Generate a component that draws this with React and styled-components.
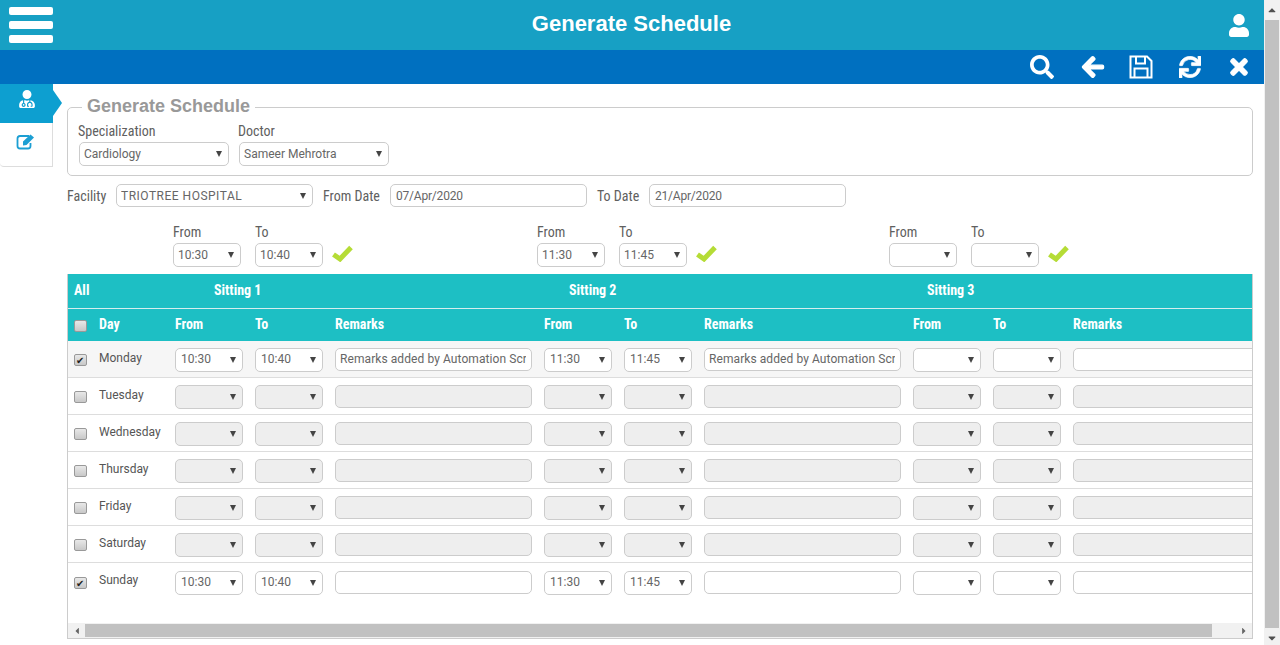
import React from "react";
import styled, { createGlobalStyle } from "styled-components";
import { FaUser, FaSearch, FaArrowLeft, FaSync, FaTimes, FaUserMd, FaCaretUp, FaCaretDown, FaCaretLeft, FaCaretRight } from "react-icons/fa";

const Global = createGlobalStyle`
  html, body { margin: 0; padding: 0; height: 645px; overflow: hidden; background: #fff; }
  * { box-sizing: border-box; }
  body { font-family: Roboto, "Liberation Sans", sans-serif; color: #555; }
`;

const condensed = `font-family: "Roboto Condensed", "Liberation Sans Narrow", Roboto, sans-serif;`;

const Page = styled.div`display: flex; width: 1280px; height: 645px; overflow: hidden;`;
const Main = styled.div`flex: none; width: 1264px; display: flex; flex-direction: column;`;

const Header = styled.header`
  height: 50px; background: #17a0c4; display: flex; align-items: center; justify-content: space-between;
  padding: 0 15px 0 9px; position: relative; flex: none;
`;
const Burger = styled.div`display: flex; flex-direction: column; gap: 6px; width: 44px;`;
const BurgerBar = styled.span`height: 8px; background: #fff; border-radius: 2px;`;
const Title = styled.h1`
  position: absolute; left: 0; right: 1px; top: 11px; margin: 0; text-align: center;
  font: bold 22px/26px "Liberation Sans", Arial, sans-serif; color: #fff;
`;
const UserIcon = styled(FaUser)`color: #fff; width: 20px; height: 23px;`;

const Toolbar = styled.div`
  height: 34px; background: #0070c0; display: flex; align-items: center; justify-content: flex-end;
  flex: none; padding-right: 13px; gap: 25px; color: #fff;
`;
const ToolIcon = styled.span`
  display: flex; width: 24px; height: 24px; align-items: center; justify-content: center;
  transform: translateX(${p => p.$dx || 0}px);
  svg { flex: none; width: ${p => p.$s || 24}px; height: ${p => p.$s || 24}px; stroke: currentColor; stroke-width: ${p => p.$bold || 0}; }
`;

const Body = styled.div`flex: 1; display: flex; min-height: 0;`;
const Side = styled.nav`flex: none; width: 67px;`;
const SideItem = styled.div`
  width: 53px; height: ${p => p.$h}px; display: flex; justify-content: center; padding-top: ${p => p.$pt}px;
  position: relative;
  background: ${p => (p.$active ? "#0d9fd0" : "#fff")};
  color: ${p => (p.$active ? "#fff" : "#1c9fd3")};
  border-right: ${p => (p.$active ? "0" : "1px solid #ddd")};
  border-bottom: ${p => (p.$active ? "0" : "1px solid #ddd")};
  border-bottom-left-radius: ${p => (p.$active ? "0" : "4px")};
  &::after {
    content: ""; display: ${p => (p.$active ? "block" : "none")}; position: absolute; left: 53px; top: 6px;
    border-left: 9px solid #0d9fd0; border-top: 13px solid transparent; border-bottom: 13px solid transparent;
  }
`;
const Content = styled.div`flex: none; width: 1186px; display: flex; flex-direction: column; position: relative;`;

const Fieldset = styled.fieldset`
  margin: 13px 0 0; padding: 6px 0 0 11px; height: 79px; border: 1px solid #ccc; border-radius: 5px; display: flex; gap: 10px; min-width: 0;
  align-items: flex-start;
`;
const Legend = styled.legend`
  margin-left: 3px; padding: 0 5px 2px; font: bold 18px/18px "Liberation Sans", Arial, sans-serif; color: #999;
`;
const FieldCol = styled.div`display: flex; flex-direction: column; gap: 3px; width: 150px;`;
const Label = styled.label`
  ${condensed} font-size: 14px; line-height: 16px; color: #606060; display: block; white-space: nowrap;
`;
const FieldLabel = styled(Label)`margin-left: -1px;`;
const SelectWrap = styled.span`
  display: block; position: relative; flex: none; width: ${p => p.$w || 68}px; height: ${p => p.$h || 24}px;
  &::after {
    content: ""; position: absolute; right: 7px; top: 50%; margin-top: -3px; pointer-events: none;
    border-left: 3px solid transparent; border-right: 3px solid transparent; border-top: 6px solid #444;
  }
`;
const SelectBox = styled.select`
  appearance: none; display: block; width: 100%; height: 100%; border: 1px solid #ccc; border-radius: 5px; padding: 0 14px 0 4px;
  font: 12px Roboto, sans-serif; color: #666; letter-spacing: ${p => p.$ls || 0}px; background-color: ${p => (p.disabled ? "#eee" : "#fff")}; opacity: 1; outline: none;
`;
const Select = ({ w, h, ls, children, ...rest }) => (
  <SelectWrap $w={w} $h={h}><SelectBox $ls={ls} {...rest}>{children}</SelectBox></SelectWrap>
);
const Input = styled.input`
  width: 197px; height: 23px; border: 1px solid #ccc; border-radius: 5px; padding: 0 5px;
  font: 12px Roboto, sans-serif; color: #666; letter-spacing: ${p => p.$ls || 0}px; background: ${p => (p.disabled ? "#eee" : "#fff")}; flex: none;
  outline: none;
`;
const FilterRow = styled.div`display: flex; align-items: center; height: 23px; margin-top: 8px;`;
const FilterLabel = styled(Label)`width: ${p => p.$w}px; flex: none;`;
const Gap = styled.span`width: ${p => p.$w}px; flex: none;`;

const TimeRow = styled.div`display: flex; padding-left: 106px; margin-top: 17px; height: 43px;`;
const TimeCol = styled.div`display: flex; flex-direction: column; gap: 3px;`;
const CheckSvg = styled.svg`flex: none; width: 22px; height: 17px; margin-left: -6px; margin-top: 21px;`;
const TimeGroupRow = styled.div`display: flex; gap: 14px; width: ${p => p.$w}px; flex: none;`;

const Table = styled.div`
  margin-top: 7px; width: 1186px; height: 365px; display: flex; flex-direction: column; overflow: hidden;
  border: 1px solid #ccc; border-top: 0; position: relative;
`;
const SitRow = styled.div`
  height: 35px; margin: 0 -1px; padding: 0 0 2px 7px; background: #1dbfc4; border-bottom: 1px solid #d5eeee; display: flex; align-items: center;
  color: #fff; flex: none; font-weight: bold; ${condensed} font-size: 14px;
`;
const SitCell = styled.span`flex: none; width: ${p => p.$w}px;`;
const RowGrid = styled.div`
  display: grid; grid-template-columns: 12px 64px 68px 68px 197px 68px 68px 197px 68px 68px 197px; column-gap: 12px; padding-left: 7px;
  align-items: center; width: 1300px; flex: none;
`;
const Box = styled.input`
  appearance: none; margin: ${p => (p.$head ? "4px" : "0")} 0 0 -1px; width: 13px; height: 12px; border: 1px solid #999; border-radius: 2px; position: relative;
  background: linear-gradient(#e8e8e8, #c8c8c8);
  &:checked::after { content: "✔"; position: absolute; left: 1px; top: -1px; font: 10px/13px "DejaVu Sans", sans-serif; color: #222; }
`;
const HeadRow = styled(RowGrid)`
  height: 32px; padding-bottom: 2px; background: #1dbfc4; color: #fff; font-weight: bold; ${condensed} font-size: 14px;
  width: 1184px; overflow: hidden;
`;
const DayRow = styled(RowGrid)`
  height: 37px; padding-top: 2px; border-bottom: 1px solid #ddd; background: ${p => (p.$shade ? "#f6f6f6" : "#fff")};
  &:last-of-type { border-bottom: 0; }
  select { padding-left: 5px; padding-bottom: 2px; }
  input[type="text"] { padding-left: 4px; padding-bottom: 1px; margin-top: -1px; }
`;
const DayName = styled.span`font-size: 12px; color: #555; margin-top: -5px;`;
const Rows = styled.div`flex: 1; overflow: hidden; background: #fff;`;

const HBar = styled.div`
  height: 15px; background: #f1f1f1; display: flex; align-items: center; flex: none; color: #666;
`;
const HBtn = styled.span`width: 17px; display: flex; justify-content: center; flex: none; svg { width: 8px; height: 10px; }`;
const HThumb = styled.span`height: 13px; width: 1127px; background: #c1c1c1; flex: none;`;
const HTrack = styled.span`flex: 1;`;

const VBar = styled.div`flex: none; width: 16px; height: 645px; background: #f1f1f1; display: flex; flex-direction: column; align-items: center; color: #505050;`;
const VBtn = styled.span`height: 20px; display: flex; align-items: center; justify-content: center; flex: none; svg { width: 12px; height: 12px; }`;
const VThumb = styled.span`width: 14px; height: 608px; background: #c1c1c1; flex: none;`;

const Check = () => (
  <CheckSvg viewBox="0 0 22 17"><path d="M2.5 9.5L9 14L20 2.5" fill="none" stroke="#b5dc36" strokeWidth="5" /></CheckSvg>
);
const EditIcon = () => (
  <svg width="21" height="17" viewBox="0 0 21 17" fill="none">
    <path d="M13 3H4Q1.5 3 1.5 5.5V13Q1.5 15.500 4 15.500H12Q14.500 15.500 14.500 13V10" stroke="currentColor" strokeWidth="1.8" />
    <path d="M7 8.500L14.500 1.500L18 4.500L10.500 12L7 12.500Z" fill="currentColor" />
  </svg>
);
const SaveIcon = () => (
  <svg viewBox="0 0 24 24" fill="none" style={{ stroke: "currentColor" }}>
    <path d="M1.500 1.500H18L22.500 6V22.500H1.500Z" strokeWidth="2" />
    <path d="M7 2V8.500H16V2" strokeWidth="2" />
    <path d="M5.500 22V13.500H18.500V22" strokeWidth="2" />
  </svg>
);

const times = { a: ["10:30", "10:40"], b: ["11:30", "11:45"], c: ["", ""] };
const TimeSel = ({ v, disabled }) => (
  <Select defaultValue={v} disabled={disabled}>
    <option value=""></option><option>10:30</option><option>10:40</option><option>11:30</option><option>11:45</option>
  </Select>
);
const Sitting = ({ t, rem, disabled }) => (
  <>
    <TimeSel v={t[0]} disabled={disabled} />
    <TimeSel v={t[1]} disabled={disabled} />
    <Input type="text" $ls={0.08} defaultValue={rem} disabled={disabled} />
  </>
);
const Top = ({ t, w }) => (
  <TimeGroupRow $w={w}>
    <TimeCol><Label>From</Label><TimeSel v={t[0]} /></TimeCol>
    <TimeCol><Label>To</Label><TimeSel v={t[1]} /></TimeCol>
    <Check />
  </TimeGroupRow>
);
const REM = "Remarks added by Automation Script";
const days = [
  ["Monday", true, REM], ["Tuesday"], ["Wednesday"], ["Thursday"], ["Friday"], ["Saturday"], ["Sunday", true, ""],
];

export default function App() {
  return (
    <Page>
      <Global />
      <Main>
        <Header>
          <Burger><BurgerBar /><BurgerBar /><BurgerBar /></Burger>
          <Title>Generate Schedule</Title>
          <UserIcon />
        </Header>
        <Toolbar>
          <ToolIcon $dx={-1}><FaSearch /></ToolIcon>
          <ToolIcon $dx={1} $bold={30}><FaArrowLeft /></ToolIcon>
          <ToolIcon><SaveIcon /></ToolIcon>
          <ToolIcon $s={22} $bold={15}><FaSync /></ToolIcon>
          <ToolIcon $bold={25}><FaTimes /></ToolIcon>
        </Toolbar>
        <Body>
          <Side>
            <SideItem $active $h={39} $pt={6}><FaUserMd size={18} /></SideItem>
            <SideItem $h={44} $pt={10}><EditIcon /></SideItem>
          </Side>
          <Content>
            <Fieldset>
              <Legend>Generate Schedule</Legend>
              <FieldCol><FieldLabel>Specialization</FieldLabel><Select w={150}><option>Cardiology</option></Select></FieldCol>
              <FieldCol><FieldLabel>Doctor</FieldLabel><Select w={150}><option>Sameer Mehrotra</option></Select></FieldCol>
            </Fieldset>
            <FilterRow>
              <FilterLabel $w={49}>Facility</FilterLabel>
              <Select w={197} h={23} ls={0.5}><option>TRIOTREE HOSPITAL</option></Select>
              <Gap $w={10} />
              <FilterLabel $w={67}>From Date</FilterLabel>
              <Input $ls={-0.2} defaultValue="07/Apr/2020" />
              <Gap $w={10} />
              <FilterLabel $w={52}>To Date</FilterLabel>
              <Input $ls={-0.2} defaultValue="21/Apr/2020" />
            </FilterRow>
            <TimeRow>
              <Top t={times.a} w={364} />
              <Top t={times.b} w={352} />
              <Top t={times.c} w={200} />
            </TimeRow>
            <Table>
              <SitRow>
                <SitCell $w={140}>All</SitCell>
                <SitCell $w={355}>Sitting 1</SitCell>
                <SitCell $w={358}>Sitting 2</SitCell>
                <SitCell $w={200}>Sitting 3</SitCell>
              </SitRow>
              <HeadRow>
                <Box type="checkbox" $head />
                <span>Day</span>
                <span>From</span><span>To</span><span>Remarks</span>
                <span>From</span><span>To</span><span>Remarks</span>
                <span>From</span><span>To</span><span>Remarks</span>
              </HeadRow>
              <Rows>
                {days.map(([d, on, rem], i) => (
                  <DayRow key={d} $shade={i === 0}>
                    <Box type="checkbox" defaultChecked={!!on} />
                    <DayName>{d}</DayName>
                    <Sitting t={on ? times.a : times.c} rem={rem || ""} disabled={!on} />
                    <Sitting t={on ? times.b : times.c} rem={rem || ""} disabled={!on} />
                    <Sitting t={times.c} rem="" disabled={!on} />
                  </DayRow>
                ))}
              </Rows>
              <HBar>
                <HBtn><FaCaretLeft /></HBtn>
                <HThumb />
                <HTrack />
                <HBtn><FaCaretRight /></HBtn>
              </HBar>
            </Table>
          </Content>
        </Body>
      </Main>
      <VBar>
        <VBtn><FaCaretUp /></VBtn>
        <VThumb />
        <VBtn><FaCaretDown /></VBtn>
      </VBar>
    </Page>
  );
}
